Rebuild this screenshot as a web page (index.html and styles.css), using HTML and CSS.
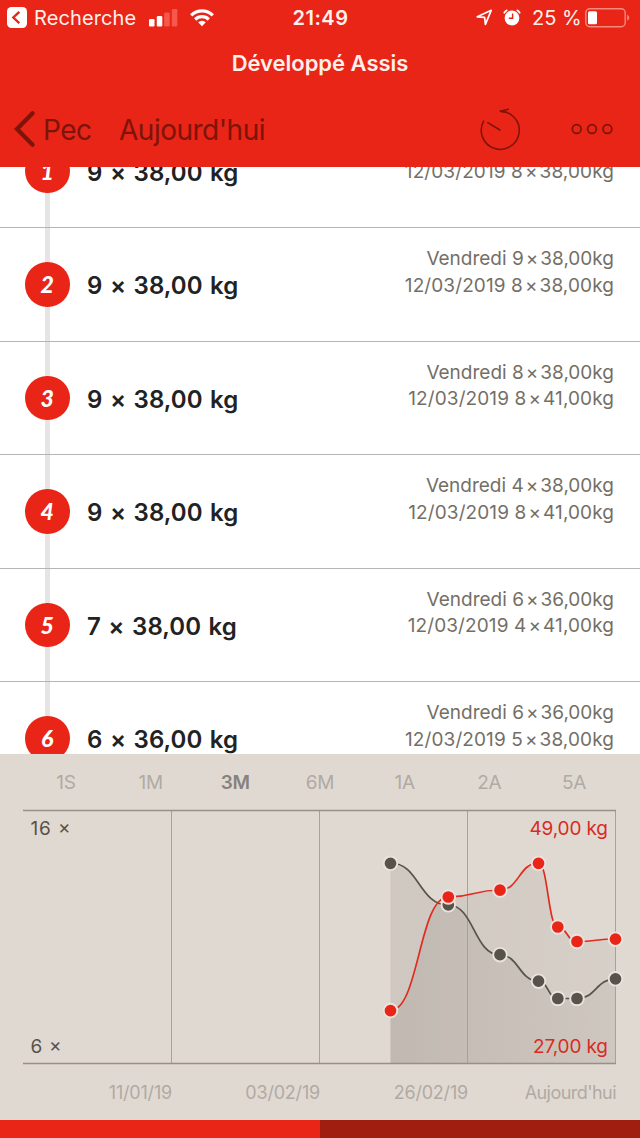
FILE: index.html
```html
<!DOCTYPE html>
<html lang="fr">

<head>
  <meta charset="UTF-8">
  <meta name="viewport" content="width=device-width">
  <title>Développé Assis</title>
  <link rel="stylesheet" href="styles.css">
</head>

<body>

  <header class="header">
    <div class="status">
      <div class="status-left">
        <svg class="back-app" width="20" height="21" viewBox="0 0 20 21">
          <rect width="20" height="21" rx="4.5" fill="#fff"/>
          <path d="M12.300 4.800 6.300 10.500l6 5.600" fill="none" stroke="#e82517" stroke-width="2.3"/>
        </svg>
        <span class="recherche">Recherche</span>
        <svg class="signal" width="29" height="18" viewBox="0 0 29 18">
          <rect x="0" y="10" width="5.5" height="7.5" rx="1.2" fill="#fff"/>
          <rect x="7.8" y="7" width="5.5" height="10.5" rx="1.2" fill="#fff"/>
          <rect x="15.2" y="3.5" width="5.5" height="14" rx="1.2" fill="#f6594b"/>
          <rect x="22.8" y="0" width="5.5" height="17.5" rx="1.2" fill="#f6594b"/>
        </svg>
        <svg class="wifi" width="24" height="18" viewBox="0 0 24 18">
          <g fill="none" stroke="#fff" stroke-width="3.2">
            <path d="M1.2 6.3a15.3 15.3 0 0 1 21.6 0"/>
            <path d="M5.2 10.5a9.7 9.7 0 0 1 13.6 0"/>
          </g>
          <path d="M12 17.2 8.2 13.3a5.4 5.4 0 0 1 7.6 0z" fill="#fff"/>
        </svg>
      </div>
      <span class="clock">21:49</span>
      <div class="status-right">
        <svg class="location" width="17" height="17" viewBox="0 0 17 17">
          <path d="M1.300 7.800 15.200 1.300 9.400 15.300 8.600 8.300z" fill="none" stroke="#fff" stroke-width="1.700" stroke-linejoin="round"/>
        </svg>
        <svg class="alarm" width="18" height="17" viewBox="0 0 18 17">
          <circle cx="9" cy="9" r="7.4" fill="#fff"/>
          <path d="M1 4.4A6 6 0 0 1 4.3 1M17 4.4A6 6 0 0 0 13.7 1" fill="none" stroke="#fff" stroke-width="1.8"/>
          <path d="M9.6 4.5V9.3H5.8" fill="none" stroke="#e82517" stroke-width="1.4"/>
        </svg>
        <span class="percent">25 %</span>
        <svg class="battery" width="45" height="20" viewBox="0 0 45 20">
          <rect x=".8" y=".8" width="39.4" height="18" rx="4" fill="none" stroke="#f88a7d" stroke-width="1.4"/>
          <rect x="3" y="3.3" width="9" height="13" rx="1.5" fill="#fff"/>
          <path d="M42.2 6.8a3.2 3.2 0 0 1 0 6z" fill="#f88a7d"/>
        </svg>
      </div>
    </div>

    <h1 class="title">Développé Assis</h1>

    <nav class="nav">
      <svg class="chevron" width="22" height="38" viewBox="0 0 22 38">
        <path d="M18.6 3.3 3 19l15.600 15.7" fill="none" stroke="#7d1409" stroke-width="4.2" stroke-linecap="round" stroke-linejoin="miter"/>
      </svg>
      <span class="pec">Pec</span>
      <span class="today">Aujourd'hui</span>
      <svg class="timer" width="42" height="44" viewBox="0 0 42 44">
        <g fill="none" stroke="#7d1409" stroke-width="1.5" stroke-linecap="round">
          <path d="M4.600 14.200A19 19 0 1 0 21.600 4.300"/>
          <path d="M21.200 4.300 29.300 2.200M21.200 4.300l7 1.200"/>
          <path d="M8.700 15.700 21 23"/>
        </g>
      </svg>
      <svg class="more" width="42" height="12" viewBox="0 0 42 12">
        <g fill="none" stroke="#7d1409" stroke-width="1.7">
          <circle cx="5.700" cy="6" r="4.400"/>
          <circle cx="21" cy="6" r="4.400"/>
          <circle cx="36.400" cy="6" r="4.400"/>
        </g>
      </svg>
    </nav>
  </header>

  <main class="series">
    <ol class="list">
      <li class="row">
        <span class="num">1</span>
        <span class="set">9 × 38,00 kg</span>
        <p class="past"><span>Vendredi 9<i>×</i>38,00kg</span><span>12/03/2019 8<i>×</i>38,00kg</span></p>
      </li>
      <li class="row">
        <span class="num">2</span>
        <span class="set">9 × 38,00 kg</span>
        <p class="past"><span>Vendredi 9<i>×</i>38,00kg</span><span>12/03/2019 8<i>×</i>38,00kg</span></p>
      </li>
      <li class="row">
        <span class="num">3</span>
        <span class="set">9 × 38,00 kg</span>
        <p class="past"><span>Vendredi 8<i>×</i>38,00kg</span><span>12/03/2019 8<i>×</i>41,00kg</span></p>
      </li>
      <li class="row">
        <span class="num">4</span>
        <span class="set">9 × 38,00 kg</span>
        <p class="past"><span>Vendredi 4<i>×</i>38,00kg</span><span>12/03/2019 8<i>×</i>41,00kg</span></p>
      </li>
      <li class="row">
        <span class="num">5</span>
        <span class="set">7 × 38,00 kg</span>
        <p class="past"><span>Vendredi 6<i>×</i>36,00kg</span><span>12/03/2019 4<i>×</i>41,00kg</span></p>
      </li>
      <li class="row">
        <span class="num">6</span>
        <span class="set">6 × 36,00 kg</span>
        <p class="past"><span>Vendredi 6<i>×</i>36,00kg</span><span>12/03/2019 5<i>×</i>38,00kg</span></p>
      </li>
    </ol>
  </main>

  <section class="stats">
    <div class="ranges">
      <span>1S</span>
      <span>1M</span>
      <span class="active">3M</span>
      <span>6M</span>
      <span>1A</span>
      <span>2A</span>
      <span>5A</span>
    </div>

    <svg class="chart" width="640" height="260" viewBox="0 806 640 260">
      <defs>
        <linearGradient id="shade" x1="0" y1="0" x2="1" y2="0">
          <stop offset="0" stop-color="#6e665c" stop-opacity=".15"/>
          <stop offset="1" stop-color="#6e665c" stop-opacity=".08"/>
        </linearGradient>
      </defs>

      <!-- zones sous les courbes -->
      <path fill="url(#shade)" d="M390.500 863C419 863 419 905 448.300 905 474 905 474 955 500 955 519 955 519 981 538.500 981 548 981 548 998.500 557.800 998.500H577C596 998.500 596 979 615.500 979V1063H390.500z"/>
      <path fill="url(#shade)" d="M390.500 1010.500C419 1010.500 419 897 448.300 897 474 897 474 890 500 890 519 890 519 863 538.500 863 548 863 548 927 557.800 927 567 927 567 941.500 577 941.500 596 941.500 596 939 615.500 939V1063H390.500z"/>

      <g stroke="#a8a09a" stroke-width="1">
        <path d="M171.500 811V1063M319.500 811V1063M467.500 811V1063M615.500 811V1063"/>
        <path d="M23 810.500H616M23 1063.500H616" stroke="#978f89" stroke-width="1.400"/>
      </g>

      <!-- répétitions -->
      <path fill="none" stroke="#57534b" stroke-width="1.700" d="M390.500 863C419 863 419 905 448.300 905 474 905 474 955 500 955 519 955 519 981 538.500 981 548 981 548 998.500 557.800 998.500H577C596 998.500 596 979 615.500 979"/>
      <g class="dots reps">
        <circle cx="390.500" cy="863.300" r="6.800"/>
        <circle cx="448.300" cy="904.800" r="6.800"/>
        <circle cx="500" cy="954.700" r="6.800"/>
        <circle cx="538.500" cy="981.200" r="6.800"/>
        <circle cx="557.800" cy="998.500" r="6.800"/>
        <circle cx="577" cy="998.500" r="6.800"/>
        <circle cx="615.500" cy="978.800" r="6.800"/>
      </g>

      <!-- poids -->
      <path fill="none" stroke="#e12a20" stroke-width="1.700" d="M390.500 1010.500C419 1010.500 419 897 448.300 897 474 897 474 890 500 890 519 890 519 863 538.500 863 548 863 548 927 557.800 927 567 927 567 941.500 577 941.500 596 941.500 596 939 615.500 939"/>
      <g class="dots weight">
        <circle cx="390.500" cy="1010.600" r="6.800"/>
        <circle cx="448.300" cy="897" r="6.800"/>
        <circle cx="500" cy="890.200" r="6.800"/>
        <circle cx="538.500" cy="863.300" r="6.800"/>
        <circle cx="557.800" cy="927" r="6.800"/>
        <circle cx="577" cy="941.500" r="6.800"/>
        <circle cx="615.500" cy="939.200" r="6.800"/>
      </g>

      <g class="scale">
        <text x="30.500" y="835" textLength="40">16 ×</text>
        <text x="30.500" y="1052.500" textLength="31">6 ×</text>
        <text class="kg" x="529.500" y="835" textLength="78.500">49,00 kg</text>
        <text class="kg" x="533" y="1052.500" textLength="75">27,00 kg</text>
      </g>
    </svg>

    <div class="dates">
      <span>11/01/19</span>
      <span>03/02/19</span>
      <span>26/02/19</span>
      <span class="now">Aujourd'hui</span>
    </div>
  </section>

  <footer class="pager"></footer>

</body>

</html>
```
FILE: styles.css
```css
* {
  margin: 0;
  padding: 0;
  box-sizing: border-box;
}

body {
  width: 640px;
  height: 1138px;
  display: flex;
  flex-direction: column;
  overflow: hidden;
  background-color: #fff;
  color: #222;
  font-family: Inter, "Liberation Sans", sans-serif;
  white-space: nowrap;
}

/* En-tête */
.header {
  height: 167px;
  flex: none;
  background-color: #e82517;
  color: #fff0ea;
}

.status {
  height: 35px;
  display: grid;
  grid-template-columns: 1fr 58px 1fr;
  align-items: center;
  font-size: 20px;
}

.status-left {
  display: flex;
  align-items: center;
  padding-left: 7px;
}

.recherche {
  width: 102px;
  margin: 0 13px 0 7px;
  letter-spacing: 0.1px;
}

.wifi {
  margin-left: 12px;
}

.clock {
  padding-left: 1px;
  font-weight: 600;
  text-align: center;
  letter-spacing: 0.5px;
}

.status-right {
  display: flex;
  align-items: center;
  justify-content: flex-end;
  padding-right: 10px;
}

.alarm {
  margin: 0 11px 0 10px;
}

.percent {
  width: 49px;
  margin-right: 4px;
}

.title {
  height: 56px;
  line-height: 56px;
  text-align: center;
  font-size: 22px;
  font-weight: 600;
  letter-spacing: -0.02px;
}

.nav {
  height: 76px;
  display: flex;
  align-items: center;
  padding: 0 27px 0 14px;
  font-size: 28px;
  letter-spacing: -0.5px;
  color: #7d1409;
}

.pec {
  width: 48px;
  margin: 2px 28px 0 7px;
}

.today {
  margin-top: 2px;
}

.timer {
  margin: 0 50px 0 auto;
}

/* Liste des séries */
.series {
  height: 587px;
  flex: none;
  overflow: hidden;
}

.list {
  list-style: none;
  margin-top: -52.5px;
}

.row {
  height: 113.5px;
  display: flex;
  align-items: center;
  padding: 0 26px 0 25px;
  border-bottom: 1px solid #b5b5b3;
  background: linear-gradient(#e6e5e4, #e6e5e4) 45px 0 / 5px 100% no-repeat;
}

.num {
  width: 44.5px;
  height: 44.5px;
  border-radius: 50%;
  background-color: #e82517;
  color: #fff;
  font: italic 900 23px/44px Lato, sans-serif;
  text-align: center;
}

.set {
  margin: 3px 0 0 17.5px;
  font-size: 24px;
  font-weight: 560;
  letter-spacing: 0.05px;
  word-spacing: 1.4px;
}

.past {
  margin: -23px 0 0 auto;
  text-align: right;
  font-size: 19px;
  line-height: 26.5px;
  color: #746f66;
}

.past span {
  display: block;
}

.past span + span {
  letter-spacing: 0.1px;
}

.past i {
  font-style: normal;
  margin: 0 2px;
}

/* Graphique */
.stats {
  height: 366px;
  flex: none;
  background-color: #e0d9d2;
}

.ranges {
  height: 52px;
  display: grid;
  grid-template-columns: repeat(7, 84.7px);
  justify-content: center;
  align-items: center;
  padding-top: 4px;
  font-size: 19px;
  text-align: center;
  letter-spacing: -0.2px;
  color: #b0aaa4;
}

.ranges .active {
  font-weight: 600;
  color: #87827c;
}

.chart {
  display: block;
}

.dots circle {
  stroke: #eae2dc;
  stroke-width: 1.9;
}

.reps circle {
  fill: #57534b;
}

.weight circle {
  fill: #e82517;
}

.scale {
  font-size: 19px;
  fill: #57534b;
}

.scale .kg {
  fill: #da2b22;
}

.dates {
  height: 54px;
  display: grid;
  grid-template-columns: repeat(4, 148px);
  padding-left: 24px;
  line-height: 53px;
  font-size: 18px;
  text-align: right;
  letter-spacing: -0.2px;
  color: #b0aaa4;
}

.dates .now {
  letter-spacing: -0.55px;
}

/* Barre de pages */
.pager {
  height: 18px;
  flex: none;
  background: linear-gradient(90deg, #e82517 50%, #a01e10 50%);
}
```
